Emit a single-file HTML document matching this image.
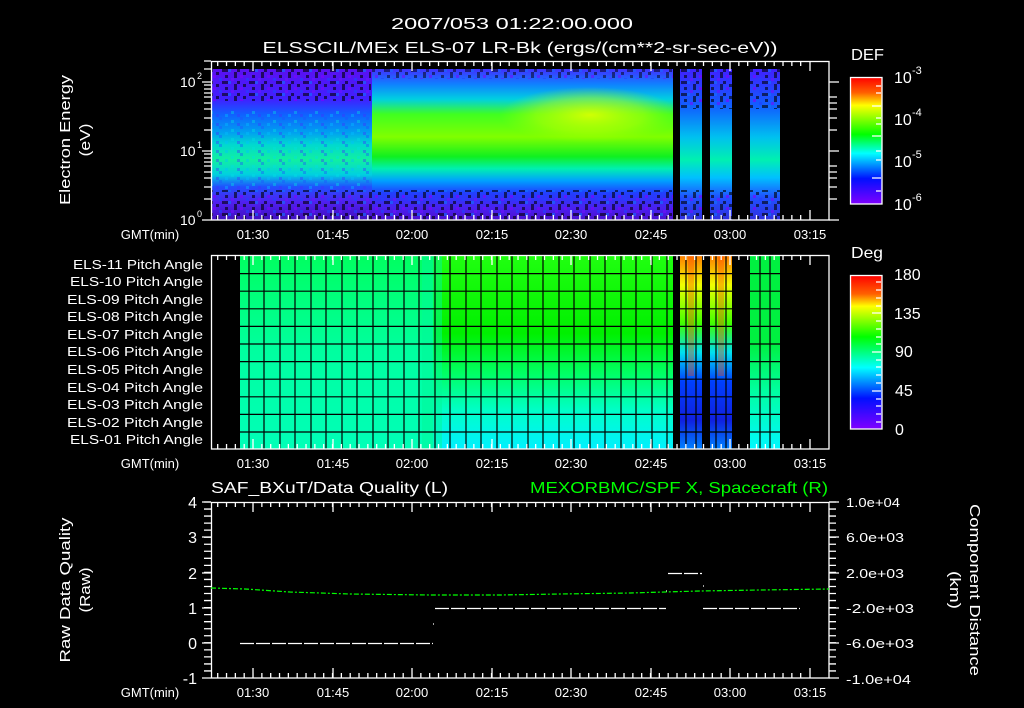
<!DOCTYPE html>
<html><head><meta charset="utf-8"><style>
html,body{margin:0;padding:0;background:#000;}
svg{display:block}
text{font-family:"Liberation Sans",sans-serif;fill:#fff}
</style></head><body>
<svg width="1024" height="708" viewBox="0 0 1024 708" xmlns="http://www.w3.org/2000/svg">
<defs>
<linearGradient id="gA" x1="0" y1="0" x2="0" y2="1">
<stop offset="0" stop-color="#5a10f0"/><stop offset="0.2" stop-color="#4020ff"/>
<stop offset="0.3" stop-color="#1060ff"/><stop offset="0.42" stop-color="#00a0f0"/>
<stop offset="0.5" stop-color="#00d8d0"/><stop offset="0.6" stop-color="#10f0a0"/>
<stop offset="0.7" stop-color="#00d0e0"/><stop offset="0.78" stop-color="#2050ff"/>
<stop offset="0.88" stop-color="#5020f0"/><stop offset="1" stop-color="#4010c0"/>
</linearGradient>
<linearGradient id="gB" x1="0" y1="0" x2="0" y2="1">
<stop offset="0" stop-color="#4030ff"/><stop offset="0.1" stop-color="#1080ff"/>
<stop offset="0.2" stop-color="#00d0e0"/><stop offset="0.3" stop-color="#40ff20"/>
<stop offset="0.45" stop-color="#80ff00"/><stop offset="0.58" stop-color="#10f020"/>
<stop offset="0.66" stop-color="#00f0b0"/><stop offset="0.74" stop-color="#00a0ff"/>
<stop offset="0.82" stop-color="#2040ff"/><stop offset="0.92" stop-color="#4a20f0"/>
<stop offset="1" stop-color="#4a10d0"/>
</linearGradient>
<linearGradient id="gC" x1="0" y1="0" x2="0" y2="1">
<stop offset="0" stop-color="#4020ff"/><stop offset="0.25" stop-color="#1060ff"/>
<stop offset="0.45" stop-color="#00c0f0"/><stop offset="0.6" stop-color="#00f0b0"/>
<stop offset="0.72" stop-color="#00c0ff"/><stop offset="0.85" stop-color="#2050ff"/>
<stop offset="1" stop-color="#3030e0"/>
</linearGradient>
<radialGradient id="yel" cx="0.5" cy="0.5" r="0.5">
<stop offset="0" stop-color="#e0ff00" stop-opacity="0.9"/><stop offset="0.6" stop-color="#c0ff00" stop-opacity="0.5"/>
<stop offset="1" stop-color="#a0ff00" stop-opacity="0"/>
</radialGradient>
<pattern id="noise" width="27" height="12" patternUnits="userSpaceOnUse">
<rect x="0" y="0" width="3" height="3" fill="#000"/><rect x="9" y="3" width="3" height="3" fill="#000"/>
<rect x="18" y="0" width="3" height="6" fill="#000"/><rect x="6" y="9" width="6" height="3" fill="#000"/>
<rect x="21" y="9" width="3" height="3" fill="#000"/><rect x="15" y="6" width="3" height="3" fill="#7010ff"/>
<rect x="3" y="6" width="3" height="3" fill="#2040ff"/><rect x="24" y="3" width="3" height="3" fill="#8000ff"/>
<rect x="12" y="9" width="3" height="3" fill="#1070ff"/>
</pattern>
<pattern id="noise2" width="21" height="9" patternUnits="userSpaceOnUse">
<rect x="0" y="3" width="3" height="3" fill="#00e0e0"/><rect x="9" y="0" width="3" height="3" fill="#2050ff"/>
<rect x="15" y="6" width="3" height="3" fill="#00c0ff"/><rect x="6" y="6" width="3" height="3" fill="#4030ff"/>
</pattern>
<linearGradient id="cb1" x1="0" y1="0" x2="0" y2="1">
<stop offset="0" stop-color="#ff0000"/><stop offset="0.12" stop-color="#ff6000"/>
<stop offset="0.22" stop-color="#ffff00"/><stop offset="0.45" stop-color="#00ff00"/>
<stop offset="0.6" stop-color="#00ffff"/><stop offset="0.8" stop-color="#0010ff"/>
<stop offset="1" stop-color="#8000ff"/>
</linearGradient>
<linearGradient id="cb2" x1="0" y1="0" x2="0" y2="1">
<stop offset="0" stop-color="#ff0000"/><stop offset="0.12" stop-color="#ff6000"/>
<stop offset="0.2" stop-color="#ffff00"/><stop offset="0.4" stop-color="#00ff00"/>
<stop offset="0.6" stop-color="#00ffff"/><stop offset="0.8" stop-color="#0010ff"/>
<stop offset="1" stop-color="#8000ff"/>
</linearGradient>
<linearGradient id="pL" x1="0" y1="0" x2="0" y2="1">
<stop offset="0" stop-color="#00ff60"/><stop offset="0.5" stop-color="#00ffa0"/><stop offset="1" stop-color="#00ffb8"/>
</linearGradient>
<linearGradient id="pR" x1="0" y1="0" x2="0" y2="1">
<stop offset="0" stop-color="#20ff10"/><stop offset="0.4" stop-color="#00f000"/>
<stop offset="0.6" stop-color="#00ff60"/><stop offset="0.8" stop-color="#00ffc8"/><stop offset="1" stop-color="#00f0ff"/>
</linearGradient>
<linearGradient id="pX" x1="0" y1="0" x2="0" y2="1">
<stop offset="0" stop-color="#ff8000"/><stop offset="0.15" stop-color="#f0ff00"/>
<stop offset="0.35" stop-color="#40ff00"/><stop offset="0.5" stop-color="#00e0f0"/>
<stop offset="0.65" stop-color="#0040ff"/><stop offset="0.85" stop-color="#1020e0"/><stop offset="1" stop-color="#0080ff"/>
</linearGradient>
<linearGradient id="pD" x1="0" y1="0" x2="0" y2="1">
<stop offset="0" stop-color="#00f040"/><stop offset="0.45" stop-color="#00f040"/>
<stop offset="0.7" stop-color="#00ffa0"/><stop offset="1" stop-color="#00f8ff"/>
</linearGradient>
<path id="tk" fill="none" stroke="#fff" stroke-width="1.3" d="M217.7 0v5m8.833-5v5m8.833-5v5m8.833-5v5m8.833-5v5m8.833-5v5m8.833-5v5m8.833-5v5m8.833-5v5m8.833-5v5m8.833-5v5m8.833-5v5m8.833-5v5m8.833-5v5m8.833-5v5m8.833-5v5m8.833-5v5m8.833-5v5m8.833-5v5m8.833-5v5m8.833-5v5m8.833-5v5m8.833-5v5m8.833-5v5m8.833-5v5m8.833-5v5m8.833-5v5m8.833-5v5m8.833-5v5m8.833-5v5m8.833-5v5m8.833-5v5m8.833-5v5m8.833-5v5m8.833-5v5m8.833-5v5m8.833-5v5m8.833-5v5m8.833-5v5m8.833-5v5m8.833-5v5m8.833-5v5m8.833-5v5m8.833-5v5m8.833-5v5m8.833-5v5m8.833-5v5m8.833-5v5m8.833-5v5m8.833-5v5m8.833-5v5m8.833-5v5m8.833-5v5m8.833-5v5m8.833-5v5m8.833-5v5m8.833-5v5m8.833-5v5m8.833-5v5m8.833-5v5m8.833-5v5m8.833-5v5m8.833-5v5m8.833-5v5m8.833-5v5m8.833-5v5m8.833-5v5M253 0v10M333 0v10M412 0v10M492 0v10M571 0v10M651 0v10M730 0v10M810 0v10"/>
<path id="yk" fill="none" stroke="#fff" stroke-width="1.3" d="M0 0h7m-7 7.04h7m-7 7.04h7m-7 7.04h7m-7 7.04h7m-7 7.04h7m-7 7.04h7m-7 7.04h7m-7 7.04h7m-7 7.04h7m-7 7.04h7m-7 7.04h7m-7 7.04h7m-7 7.04h7m-7 7.04h7m-7 7.04h7m-7 7.04h7m-7 7.04h7m-7 7.04h7m-7 7.04h7m-7 7.04h7m-7 7.04h7m-7 7.04h7m-7 7.04h7m-7 7.04h7"/>
</defs>

<!-- titles -->
<text x="512" y="29" font-size="16" text-anchor="middle" textLength="242" lengthAdjust="spacingAndGlyphs">2007/053 01:22:00.000</text>
<text x="520" y="53" font-size="16" text-anchor="middle" textLength="515" lengthAdjust="spacingAndGlyphs">ELSSCIL/MEx ELS-07 LR-Bk  (ergs/(cm**2-sr-sec-eV))</text>

<!-- PANEL 1 -->
<rect x="211" y="69" width="161" height="151" fill="url(#gA)"/>
<rect x="372" y="69" width="301" height="151" fill="url(#gB)"/>
<ellipse cx="590" cy="115" rx="90" ry="28" fill="url(#yel)"/>
<rect x="680" y="69" width="22" height="151" fill="url(#gC)"/>
<rect x="710" y="69" width="22" height="151" fill="url(#gC)"/>
<rect x="750" y="69" width="30" height="151" fill="url(#gC)"/>
<rect x="211" y="69" width="160" height="32" fill="url(#noise)" opacity="0.6"/>
<rect x="211" y="190" width="569" height="30" fill="url(#noise)" opacity="0.6"/>
<rect x="372" y="69" width="301" height="10" fill="url(#noise)" opacity="0.5"/>
<rect x="680" y="69" width="100" height="40" fill="url(#noise)" opacity="0.6"/>
<rect x="211" y="110" width="160" height="80" fill="url(#noise2)" opacity="0.4"/>
<rect x="673" y="69" width="7" height="151" fill="#000"/>
<rect x="702" y="69" width="8" height="151" fill="#000"/>
<rect x="732" y="69" width="18" height="151" fill="#000"/>
<use href="#tk" transform="translate(0,61)"/>
<use href="#tk" transform="translate(0,220) scale(1,-1)"/>
<rect x="211.5" y="61.5" width="617.5" height="158.5" fill="none" stroke="#fff" stroke-width="1.3"/>
<g stroke="#fff" stroke-width="1.3">
<path d="M202 220h9M202 151h9M202 82h9M204 199h7M204 187h7M204 178h7M204 172h7M204 166h7M204 162h7M204 158h7M204 154h7M204 130h7M204 118h7M204 109h7M204 103h7M204 97h7M204 93h7M204 89h7M204 85h7M204 61h7M204 69h7"/>
<path d="M829 220h10M829 151h10M829 82h10M829 199h8M829 187h8M829 178h8M829 172h8M829 166h8M829 130h8M829 118h8M829 109h8M829 103h8M829 97h8"/>
</g>
<text x="180" y="87" font-size="14">10</text><text x="197" y="79" font-size="9">2</text>
<text x="180" y="156" font-size="14">10</text><text x="197" y="148" font-size="9">1</text>
<text x="180" y="225" font-size="14">10</text><text x="197" y="217" font-size="9">0</text>
<text transform="translate(70,140) rotate(-90)" font-size="15" text-anchor="middle" textLength="130" lengthAdjust="spacingAndGlyphs">Electron Energy</text>
<text transform="translate(90,140) rotate(-90)" font-size="15" text-anchor="middle" textLength="33" lengthAdjust="spacingAndGlyphs">(eV)</text>
<g font-size="13" text-anchor="middle">
<text x="150" y="239">GMT(min)</text>
<text x="253" y="239">01:30</text><text x="333" y="239">01:45</text><text x="412" y="239">02:00</text><text x="492" y="239">02:15</text>
<text x="571" y="239">02:30</text><text x="651" y="239">02:45</text><text x="730" y="239">03:00</text><text x="810" y="239">03:15</text>
</g>
<!-- colorbar 1 -->
<text x="851" y="60" font-size="16" textLength="33" lengthAdjust="spacingAndGlyphs">DEF</text>
<rect x="850.5" y="77.5" width="31.5" height="126.5" fill="url(#cb1)" stroke="#fff" stroke-width="1.3"/>
<g stroke="#fff" stroke-width="1.3"><path d="M876 86h5M876 93h5M872 106h9M876 118h5M876 124h5M872 136h9M876 151h5M876 160h5M872 178h9M876 191h5"/></g>
<g font-size="16"><text x="894" y="83">10</text><text x="912" y="74" font-size="11">-3</text>
<text x="894" y="125">10</text><text x="912" y="116" font-size="11">-4</text>
<text x="894" y="167">10</text><text x="912" y="158" font-size="11">-5</text>
<text x="894" y="210">10</text><text x="912" y="201" font-size="11">-6</text></g>

<!-- PANEL 2 -->
<rect x="240" y="256" width="193" height="193" fill="url(#pL)"/>
<rect x="433" y="256" width="240" height="193" fill="url(#pR)"/>
<rect x="422" y="256" width="20" height="193" fill="#00f898" opacity="0.5"/>
<rect x="680" y="256" width="22" height="193" fill="url(#pX)"/>
<rect x="710" y="256" width="22" height="193" fill="url(#pX)"/>
<rect x="688" y="256" width="6" height="120" fill="#ff4000" opacity="0.35"/>
<rect x="718" y="256" width="6" height="120" fill="#ff4000" opacity="0.35"/>
<rect x="750" y="256" width="30" height="193" fill="url(#pD)"/>
<g stroke="#000" stroke-width="1.2">
<path d="M240 273.6h540M240 291.2h540M240 308.8h540M240 326.4h540M240 344h540M240 361.6h540M240 379.2h540M240 396.8h540M240 414.4h540M240 432h540"/>
<path d="M249 256v193M264 256v193M280 256v193M295 256v193M311 256v193M326 256v193M342 256v193M357 256v193M373 256v193M388 256v193M404 256v193M419 256v193M435 256v193M450 256v193M466 256v193M481 256v193M497 256v193M512 256v193M528 256v193M543 256v193M559 256v193M574 256v193M590 256v193M605 256v193M621 256v193M636 256v193M652 256v193M667 256v193M686 256v193M696 256v193M716 256v193M726 256v193M760 256v193M770 256v193"/>
</g>
<use href="#tk" transform="translate(0,255)"/>
<use href="#tk" transform="translate(0,449) scale(1,-1)"/>
<rect x="211.5" y="255.5" width="617.5" height="193.5" fill="none" stroke="#fff" stroke-width="1.3"/>
<g font-size="13" text-anchor="end">
<text x="203" y="269" textLength="130" lengthAdjust="spacingAndGlyphs">ELS-11 Pitch Angle</text>
<text x="203" y="286" textLength="133" lengthAdjust="spacingAndGlyphs">ELS-10 Pitch Angle</text>
<text x="203" y="304" textLength="136" lengthAdjust="spacingAndGlyphs">ELS-09 Pitch Angle</text>
<text x="203" y="321" textLength="136" lengthAdjust="spacingAndGlyphs">ELS-08 Pitch Angle</text>
<text x="203" y="339" textLength="136" lengthAdjust="spacingAndGlyphs">ELS-07 Pitch Angle</text>
<text x="203" y="356" textLength="136" lengthAdjust="spacingAndGlyphs">ELS-06 Pitch Angle</text>
<text x="203" y="374" textLength="136" lengthAdjust="spacingAndGlyphs">ELS-05 Pitch Angle</text>
<text x="203" y="392" textLength="136" lengthAdjust="spacingAndGlyphs">ELS-04 Pitch Angle</text>
<text x="203" y="409" textLength="136" lengthAdjust="spacingAndGlyphs">ELS-03 Pitch Angle</text>
<text x="203" y="427" textLength="136" lengthAdjust="spacingAndGlyphs">ELS-02 Pitch Angle</text>
<text x="203" y="444" textLength="133" lengthAdjust="spacingAndGlyphs">ELS-01 Pitch Angle</text>
</g>
<g font-size="13" text-anchor="middle">
<text x="150" y="468">GMT(min)</text>
<text x="253" y="468">01:30</text><text x="333" y="468">01:45</text><text x="412" y="468">02:00</text><text x="492" y="468">02:15</text>
<text x="571" y="468">02:30</text><text x="651" y="468">02:45</text><text x="730" y="468">03:00</text><text x="810" y="468">03:15</text>
</g>
<!-- colorbar 2 -->
<text x="851" y="258" font-size="16" textLength="32" lengthAdjust="spacingAndGlyphs">Deg</text>
<rect x="850.5" y="275.5" width="31.5" height="153.5" fill="url(#cb2)" stroke="#fff" stroke-width="1.3"/>
<g stroke="#fff" stroke-width="1.3"><path d="M876 282h5M876 290h5M876 298h5M876 306h5M872 313h9M876 321h5M876 329h5M876 337h5M876 344h5M872 352h9M876 360h5M876 367h5M876 375h5M876 383h5M872 391h9M876 399h5M876 406h5M876 414h5M876 422h5"/></g>
<g font-size="16"><text x="894" y="280">180</text><text x="894" y="319">135</text><text x="895" y="357">90</text><text x="895" y="396">45</text><text x="895" y="435">0</text></g>

<!-- PANEL 3 -->
<text x="211" y="493" font-size="16" textLength="237" lengthAdjust="spacingAndGlyphs">SAF_BXuT/Data Quality (L)</text>
<text x="530" y="493" font-size="16" textLength="298" lengthAdjust="spacingAndGlyphs" style="fill:#00ff00">MEXORBMC/SPF X, Spacecraft (R)</text>
<use href="#tk" transform="translate(0,502)"/>
<use href="#tk" transform="translate(0,678) scale(1,-1)"/>
<use href="#yk" transform="translate(204,502)"/>
<use href="#yk" transform="translate(829,502)"/>
<g stroke="#fff" stroke-width="1.3"><path d="M202 502h9M202 537h9M202 573h9M202 608h9M202 643h9M202 678h9M829 502h10M829 537h10M829 573h10M829 608h10M829 643h10M829 678h10"/></g>
<rect x="211.5" y="502.5" width="617.5" height="175.5" fill="none" stroke="#fff" stroke-width="1.3"/>
<g stroke="#fff" stroke-width="1.3" stroke-dasharray="14 2">
<path d="M240 643.5H433"/><path d="M435 608.5H666"/><path d="M668 573.5H702"/><path d="M703 608.5H800"/>
</g>
<path d="M433 624h1M666 591h1M703 586h1" stroke="#fff" stroke-width="1.3"/>
<path d="M211 588 L245 589 L290 592 L350 594 L430 595 L500 595 L560 594 L630 593 L700 591 L760 590 L829 589" fill="none" stroke="#00ff00" stroke-width="1.2" stroke-dasharray="5 2 2 2"/>
<g font-size="16" text-anchor="end">
<text x="197" y="508">4</text><text x="197" y="543">3</text><text x="197" y="579">2</text><text x="197" y="614">1</text><text x="197" y="649">0</text><text x="197" y="684">-1</text>
</g>
<g font-size="13">
<text x="846" y="507" textLength="54" lengthAdjust="spacingAndGlyphs">1.0e+04</text>
<text x="846" y="542" textLength="58" lengthAdjust="spacingAndGlyphs">6.0e+03</text>
<text x="846" y="578" textLength="58" lengthAdjust="spacingAndGlyphs">2.0e+03</text>
<text x="846" y="613" textLength="68" lengthAdjust="spacingAndGlyphs">-2.0e+03</text>
<text x="846" y="648" textLength="68" lengthAdjust="spacingAndGlyphs">-6.0e+03</text>
<text x="846" y="684" textLength="65" lengthAdjust="spacingAndGlyphs">-1.0e+04</text>
</g>
<text transform="translate(70,590) rotate(-90)" font-size="15" text-anchor="middle" textLength="145" lengthAdjust="spacingAndGlyphs">Raw Data Quality</text>
<text transform="translate(90,590) rotate(-90)" font-size="15" text-anchor="middle" textLength="45" lengthAdjust="spacingAndGlyphs">(Raw)</text>
<text transform="translate(970,590) rotate(90)" font-size="15" text-anchor="middle" textLength="172" lengthAdjust="spacingAndGlyphs">Component Distance</text>
<text transform="translate(950,590) rotate(90)" font-size="15" text-anchor="middle" textLength="38" lengthAdjust="spacingAndGlyphs">(km)</text>
<g font-size="13" text-anchor="middle">
<text x="150" y="697">GMT(min)</text>
<text x="253" y="697">01:30</text><text x="333" y="697">01:45</text><text x="412" y="697">02:00</text><text x="492" y="697">02:15</text>
<text x="571" y="697">02:30</text><text x="651" y="697">02:45</text><text x="730" y="697">03:00</text><text x="810" y="697">03:15</text>
</g>
</svg>
</body></html>
